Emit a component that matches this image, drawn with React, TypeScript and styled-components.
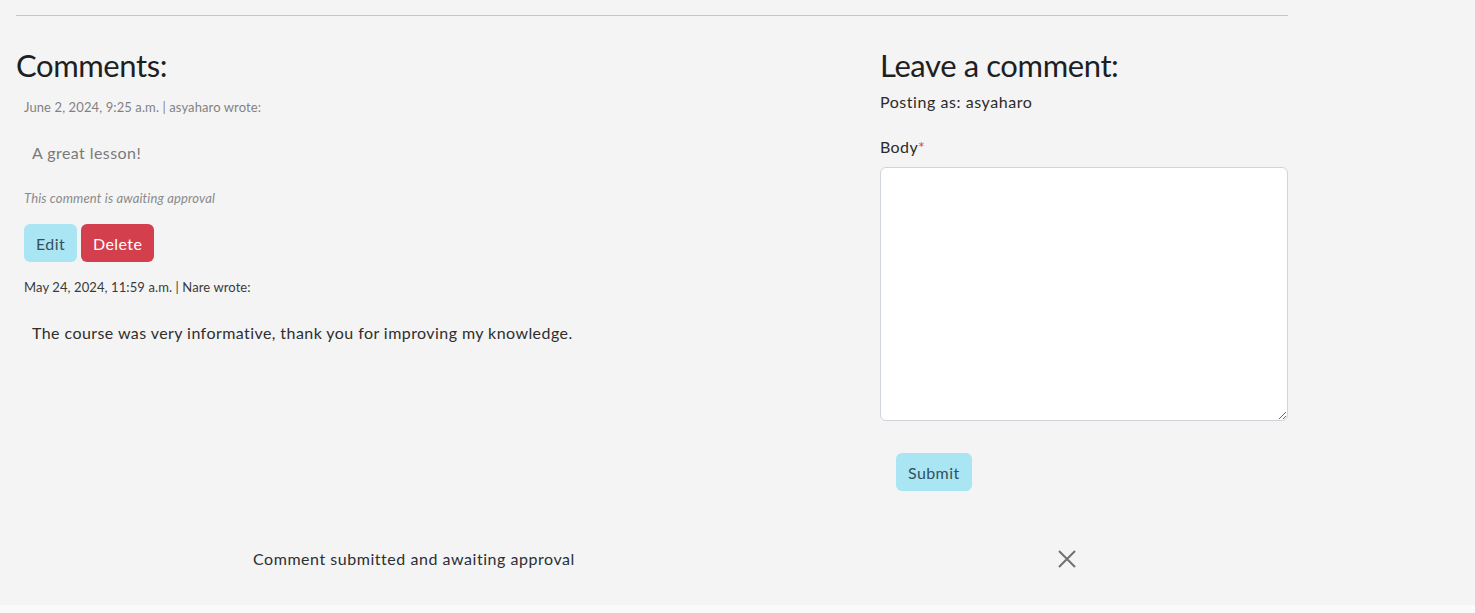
import React from "react";
import styled, { createGlobalStyle } from "styled-components";

const GlobalStyle = createGlobalStyle`
  html { background: #fafafa; }
  body {
    margin: 0;
    font-family: "Lato", "Open Sans", sans-serif;
    color: #212529;
  }
  * { box-sizing: border-box; }
`;

const Page = styled.div`
  background: #f4f4f4;
  padding: 15px 0 0;
  height: 605px;
`;

const Container = styled.div`
  width: 1272px;
  margin-left: 16px;
`;

const Rule = styled.hr`
  margin: 0;
  border: 0;
  border-top: 1px solid #c6c6c6;
`;

const Row = styled.div`
  display: grid;
  grid-template-columns: 840px 408px;
  column-gap: 24px;
  padding-top: 30px;
`;

const Column = styled.div`
  display: flex;
  flex-direction: column;
`;

const Heading = styled.h2`
  margin: 0;
  font-size: 31px;
  font-weight: 400;
  line-height: 38px;
  letter-spacing: -0.4px;
  color: #1d1f22;
`;

const CommentBlock = styled.div<{ $faded?: boolean }>`
  display: flex;
  flex-direction: column;
  padding: 0 8px;
  opacity: ${(p) => (p.$faded ? 0.62 : 1)};
`;

const Meta = styled.p`
  margin: 0;
  font-size: 13px;
  line-height: 20px;
  letter-spacing: 0.1px;
  color: #3a3a3a;
`;

const Body = styled.p`
  margin: 0;
  padding: 0 8px;
  font-size: 16px;
  line-height: 24px;
  letter-spacing: 0.43px;
  color: #2e2e2e;
`;

const Pending = styled.p`
  margin: 0;
  padding: 0 8px;
  font-size: 13px;
  font-style: italic;
  line-height: 20px;
  letter-spacing: 0.15px;
  color: #8a8a8a;
`;

const Actions = styled.div`
  display: flex;
  gap: 4px;
  padding: 0 8px;
`;

const Button = styled.button<{ $variant: "info" | "danger" }>`
  height: 38px;
  padding: 0 12px;
  border: 0;
  border-radius: 6px;
  font-family: inherit;
  font-size: 16px;
  letter-spacing: 0.4px;
  background: ${(p) => (p.$variant === "danger" ? "#d43f4e" : "#a9e5f3")};
  color: ${(p) => (p.$variant === "danger" ? "#ffffff" : "#34505f")};
  cursor: pointer;
`;

const Posting = styled.p`
  margin: 0;
  font-size: 16px;
  line-height: 24px;
  letter-spacing: 0.55px;
  color: #2b2b2b;
`;

const Label = styled.label`
  display: block;
  font-size: 16px;
  line-height: 24px;
  letter-spacing: 0.4px;
  color: #2b2b2b;
`;

const Required = styled.span`
  color: #c64d55;
`;

const TextArea = styled.textarea`
  display: block;
  width: 408px;
  height: 254px;
  margin-top: 8px;
  border: 1px solid #ced4da;
  border-radius: 6px;
  background: #fff;
  resize: vertical;
  font-family: inherit;
`;

const SubmitRow = styled.div`
  padding-left: 16px;
  margin-top: 32px;
`;

const Alert = styled.div`
  display: flex;
  align-items: center;
  justify-content: space-between;
  width: 855px;
  margin-left: 236px;
  margin-top: 36px;
  padding: 12px 16px 12px 17px;
`;

const AlertText = styled.span`
  font-size: 16px;
  line-height: 24px;
  letter-spacing: 0.54px;
  color: #2b2f36;
`;

const Close = styled.button`
  width: 48px;
  height: 40px;
  border: 0;
  background: transparent;
  display: flex;
  align-items: center;
  justify-content: center;
  margin-right: -16px;
  padding: 0;
`;

const Spacer = styled.div<{ $h: number }>`
  height: ${(p) => p.$h}px;
`;

export default function App() {
  return (
    <>
      <GlobalStyle />
      <Page>
        <Container>
          <Rule />
          <Row>
            <Column>
              <Heading>Comments:</Heading>
              <Spacer $h={13} />
              <CommentBlock $faded>
                <Meta>June 2, 2024, 9:25 a.m. | asyaharo wrote:</Meta>
                <Spacer $h={24} />
                <Body>A great lesson!</Body>
              </CommentBlock>
              <Spacer $h={23} />
              <Pending>This comment is awaiting approval</Pending>
              <Spacer $h={16} />
              <Actions>
                <Button $variant="info">Edit</Button>
                <Button $variant="danger">Delete</Button>
              </Actions>
              <Spacer $h={15} />
              <CommentBlock>
                <Meta>May 24, 2024, 11:59 a.m. | Nare wrote:</Meta>
                <Spacer $h={24} />
                <Body>The course was very informative, thank you for improving my knowledge.</Body>
              </CommentBlock>
            </Column>
            <Column>
              <Heading>Leave a comment:</Heading>
              <Spacer $h={6} />
              <Posting>Posting as: asyaharo</Posting>
              <Spacer $h={21} />
              <Label>
                Body<Required>*</Required>
              </Label>
              <TextArea />
              <SubmitRow>
                <Button $variant="info">Submit</Button>
              </SubmitRow>
            </Column>
          </Row>
        </Container>
        <Alert>
          <AlertText>Comment submitted and awaiting approval</AlertText>
          <Close aria-label="Close">
            <svg width="18" height="18" viewBox="0 0 18 18">
              <path d="M1 1 L17 17 M17 1 L1 17" stroke="#707070" strokeWidth="2" fill="none" />
            </svg>
          </Close>
        </Alert>
      </Page>
    </>
  );
}
